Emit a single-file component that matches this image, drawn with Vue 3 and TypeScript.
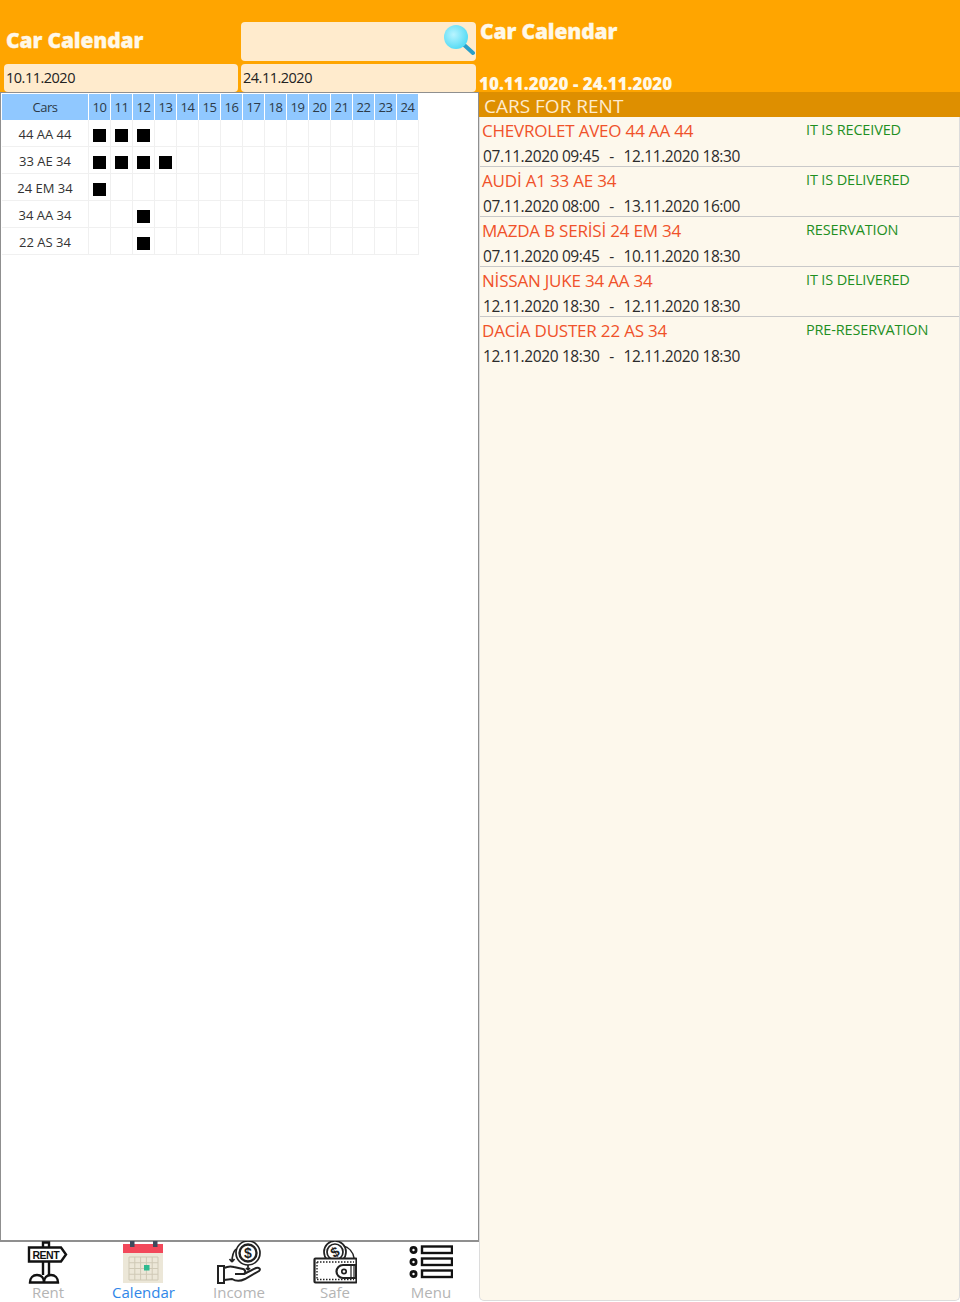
<script setup lang="ts">
const days = [10, 11, 12, 13, 14, 15, 16, 17, 18, 19, 20, 21, 22, 23, 24]
const cars = [
  { plate: '44 AA 44', on: [10, 11, 12] },
  { plate: '33 AE 34', on: [10, 11, 12, 13] },
  { plate: '24 EM 34', on: [10] },
  { plate: '34 AA 34', on: [12] },
  { plate: '22 AS 34', on: [12] },
]
const rentals = [
  { name: 'CHEVROLET AVEO 44 AA 44', status: 'IT IS RECEIVED', from: '07.11.2020 09:45', to: '12.11.2020 18:30' },
  { name: 'AUDİ A1 33 AE 34', status: 'IT IS DELIVERED', from: '07.11.2020 08:00', to: '13.11.2020 16:00' },
  { name: 'MAZDA B SERİSİ 24 EM 34', status: 'RESERVATION', from: '07.11.2020 09:45', to: '10.11.2020 18:30' },
  { name: 'NİSSAN JUKE 34 AA 34', status: 'IT IS DELIVERED', from: '12.11.2020 18:30', to: '12.11.2020 18:30' },
  { name: 'DACİA DUSTER 22 AS 34', status: 'PRE-RESERVATION', from: '12.11.2020 18:30', to: '12.11.2020 18:30' },
]
</script>

<template>
  <div class="page">
    <section class="left">
      <header class="lhead">
        <div class="ltop">
          <h1 class="title">Car Calendar</h1>
          <div class="field search">
            <svg class="lens" viewBox="0 0 32 32" width="32" height="32">
              <defs>
                <radialGradient id="lensFill" cx="0.4" cy="0.4" r="0.6">
                  <stop offset="0" stop-color="#b8f4ff" />
                  <stop offset="1" stop-color="#58dcf5" />
                </radialGradient>
              </defs>
              <line x1="19" y1="19" x2="30" y2="29" stroke="#2a9fc9" stroke-width="4" stroke-linecap="round" />
              <circle cx="13" cy="13" r="12" fill="url(#lensFill)" />
            </svg>
          </div>
        </div>
        <div class="dates">
          <div class="field date">10.11.2020</div>
          <div class="field date">24.11.2020</div>
        </div>
      </header>

      <div class="frame">
        <div class="grid">
          <div class="th carshead">Cars</div>
          <div v-for="d in days" :key="d" class="th day">{{ d }}</div>
          <template v-for="car in cars" :key="car.plate">
            <div class="td plate">{{ car.plate }}</div>
            <div v-for="d in days" :key="d" class="td cell">
              <span v-if="car.on.includes(d)" class="mark"></span>
            </div>
          </template>
        </div>
      </div>

      <nav class="tabs">
        <div class="tab">
          <svg viewBox="0 0 44 46" width="44" height="46" fill="none" stroke="#111" stroke-width="2.400">
            <path d="M17 6V1.500h6V6" />
            <path d="M3 6.500h32l5 7-5 7H3z" fill="#fff" />
            <path d="M17 21v13M23 21v13" />
            <path d="M18 41.500c0-5-3-7.500-7-7.500s-7 3-7 7.500zM18 41.500c0-5 3-7.500 7-7.500s7 3 7 7.500z" fill="#fff" />
            <text x="6.500" y="17.500" class="rent-sign">RENT</text>
          </svg>
          <span class="tablabel">Rent</span>
        </div>
        <div class="tab active">
          <svg viewBox="0 0 44 46" width="44" height="46">
            <rect x="1" y="10" width="40" height="32" fill="#ece7d8" />
            <rect x="1" y="3" width="40" height="9" fill="#f2485a" />
            <rect x="8" y="0" width="4.500" height="6" fill="#3d4a5c" />
            <rect x="31" y="0" width="4.500" height="6" fill="#3d4a5c" />
            <path d="M7 16h29v23H7zM7 21.750h29M7 27.500h29M7 33.250h29M12.800 16v23M18.600 16v23M24.400 16v23M30.200 16v23" fill="none" stroke="#cfc9b6" stroke-width="1" />
            <rect x="22" y="24" width="5.500" height="5.500" fill="#2fba8f" />
          </svg>
          <span class="tablabel">Calendar</span>
        </div>
        <div class="tab">
          <svg viewBox="0 0 44 46" width="44" height="46" fill="none" stroke="#222" stroke-width="1.700">
            <circle cx="31" cy="12" r="12" />
            <circle cx="31" cy="12" r="8.500" stroke-width="2.400" />
            <text x="27" y="17" class="dollar">$</text>
            <path d="M19 8c-3 3-4 8-4 13M15 21l-2.500-3M15 21l2.500-3" />
            <path d="M31 24v5M31 29l-2-2M31 29l2-2" />
            <path d="M1 25h6v17H1z" fill="#fff" stroke-width="2" />
            <path d="M7 27c4-2 7-2 10-1l9 2c3 1 3 5 0 5h-8M7 39l8-1c5 3 9 2 13 0l14-8c2-2 0-4-3-3l-12 6" fill="#fff" stroke-width="2" />
          </svg>
          <span class="tablabel">Income</span>
        </div>
        <div class="tab">
          <svg viewBox="0 0 44 46" width="44" height="46" fill="none" stroke="#222" stroke-width="1.700">
            <path d="M30 5c6 1 10 6 11 12" stroke-width="1.500" />
            <circle cx="22" cy="11" r="11" fill="#fff" />
            <circle cx="22" cy="11" r="8" />
            <text x="18" y="16" class="dollar" transform="rotate(-30 22 11)">$</text>
            <rect x="1.500" y="17.500" width="42" height="24" rx="1" fill="#fff" stroke-width="2.200" />
            <path d="M4 21h37M4 38.500h37M4 21v17" stroke-dasharray="1.500 1.500" stroke-width="1.400" />
            <path d="M43 24H30a6.500 6.500 0 0 0 0 13h13z" fill="#fff" stroke-width="2.200" />
            <circle cx="31" cy="30.500" r="2.200" />
            <path d="M38 24v13M41 24v13" stroke-width="1.200" />
          </svg>
          <span class="tablabel">Safe</span>
        </div>
        <div class="tab">
          <svg viewBox="0 0 44 46" width="44" height="46" fill="none" stroke="#111">
            <g stroke-width="2.800">
              <circle cx="4.500" cy="9" r="2.600" />
              <circle cx="4.500" cy="21" r="2.600" />
              <circle cx="4.500" cy="33" r="2.600" />
            </g>
            <g stroke-width="2.400">
              <rect x="13" y="5.500" width="30" height="6.500" />
              <rect x="13" y="17.500" width="30" height="6.500" />
              <rect x="13" y="29.500" width="30" height="6.500" />
            </g>
          </svg>
          <span class="tablabel">Menu</span>
        </div>
      </nav>
    </section>

    <section class="right">
      <header class="rhead">
        <h2 class="title rtitle">Car Calendar</h2>
        <div class="range">10.11.2020 - 24.11.2020</div>
      </header>
      <div class="band">CARS FOR RENT</div>
      <div class="list">
        <article v-for="r in rentals" :key="r.name" class="rental">
          <div class="rline">
            <span class="rname">{{ r.name }}</span>
            <span class="rstatus">{{ r.status }}</span>
          </div>
          <div class="rtime"><span>{{ r.from }}</span><span class="sep">-</span><span>{{ r.to }}</span></div>
        </article>
      </div>
    </section>
  </div>
</template>

<style>
html, body { margin: 0; background: #fff; }
</style>

<style scoped>
.page {
  width: 960px;
  height: 1302px;
  display: grid;
  grid-template-columns: 479px 481px;
  font-family: "Open Sans", "Noto Sans", sans-serif;
  overflow: hidden;
  background: #fff;
  letter-spacing: -0.5px;
}
.left { display: flex; flex-direction: column; height: 1302px; }
.lhead { height: 92px; background: #ffa500; box-sizing: border-box; padding-top: 22px; }
.ltop { display: flex; height: 40px; }
.title {
  margin: 0;
  color: #fff8e8;
  font-size: 21px;
  font-weight: 800;
  line-height: 28px;
  letter-spacing: -0.15px;
  font-family: "Open Sans", sans-serif;
  -webkit-text-stroke: 0.3px #fff8e8;
}
.ltop .title { width: 241px; padding: 4px 0 0 6px; box-sizing: border-box; }
.field { background: #ffebcd; border-radius: 4px; box-sizing: border-box; }
.search { width: 235px; height: 39px; position: relative; }
.lens { position: absolute; right: 1px; top: 2px; }
.dates { display: grid; grid-template-columns: 234px 235px; gap: 3px; padding: 2px 0 0 4px; }
.date {
  height: 28px;
  font-size: 14.500px;
  line-height: 28px;
  padding-left: 2px;
  color: #222;
}
.frame {
  flex: 1;
  border: 1px solid #8f8f8f;
  border-bottom-width: 2px;
  box-sizing: border-box;
  padding: 1px;
  background: #fff;
  min-height: 0;
}
.grid {
  display: grid;
  grid-template-columns: 87px repeat(15, 22px);
  grid-template-rows: 26px repeat(5, 27px);
  width: 417px;
  color: #222;
  font-size: 13px;
}
.th {
  background: #90c8ff;
  border-right: 1px solid #fff;
  display: flex;
  align-items: center;
  justify-content: center;
  box-sizing: border-box;
  color: #2c3a48;
}
.td {
  border-bottom: 1px solid #f0f0f0;
  border-right: 1px solid #f0f0f0;
  display: flex;
  align-items: center;
  justify-content: center;
  box-sizing: border-box;
  padding-top: 2px;
}
.plate { font-size: 13px; color: #333; letter-spacing: 0; }
.mark { width: 13px; height: 13px; margin-top: 2px; background: #000; display: block; }
.tabs {
  height: 60px;
  display: grid;
  grid-template-columns: 96px 95px 96px 96px 96px;
  background: #fff;
}
.tab { display: flex; flex-direction: column; align-items: center; height: 60px; }
.tab svg { display: block; margin-top: -1px; }
.tablabel {
  color: #b4b4b4;
  font-size: 15px;
  line-height: 16px;
  margin-top: -3px;
  letter-spacing: 0;
}
.active .tablabel { color: #2f86e8; }
.rent-sign { font-family: "Liberation Sans", sans-serif; font-size: 10.500px; font-weight: 700; fill: #111; stroke: none; }
.dollar { font-family: "Liberation Sans", sans-serif; font-size: 14px; font-weight: 700; fill: #222; stroke: none; }
.right { display: flex; flex-direction: column; height: 1302px; }
.rhead {
  height: 92px;
  background: #ffa500;
  display: flex;
  flex-direction: column;
  justify-content: space-between;
  box-sizing: border-box;
  padding: 17px 0 0 0;
}
.rtitle { padding-left: 1px; }
.range {
  color: #fff8e8;
  font-weight: 800;
  font-size: 17px;
  line-height: 17px;
  letter-spacing: 0;
}
.band {
  height: 25px;
  background: #de8f00;
  color: #ffebcd;
  font-size: 19px;
  line-height: 28px;
  padding-left: 5px;
  letter-spacing: 0;
}
.list {
  height: 1184px;
  background: #fdf8ec;
  border: 1px solid #dcdcdc;
  border-top: none;
  border-radius: 0 0 5px 5px;
  box-sizing: border-box;
}
.rental {
  height: 50px;
  border-bottom: 1px solid #c9c9c9;
  box-sizing: border-box;
  padding: 0 0 0 2px;
}
.rental:last-child { border-bottom: none; }
.rline { display: flex; height: 27px; align-items: center; }
.rname { width: 324px; color: #f0522a; font-size: 17px; letter-spacing: -0.2px; }
.rstatus { color: #1f8f1f; font-size: 14.500px; letter-spacing: -0.15px; line-height: 24px; height: 25px; }
.rtime { font-size: 15.500px; color: #2b2b2b; line-height: 22px; padding-top: 1px; letter-spacing: -0.38px; display: flex; padding-left: 1px; }
.sep { width: 24px; text-align: center; }
</style>
